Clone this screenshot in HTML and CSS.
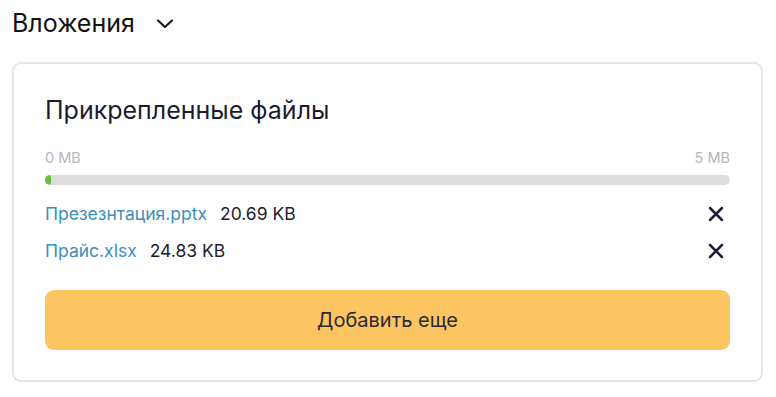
FILE: index.html
```html
<!DOCTYPE html>
<html lang="ru">
<head>
<meta charset="utf-8">
<link rel="stylesheet" href="styles.css">
</head>
<body>
<div class="page">
  <div class="section-head">
    <span class="section-title">Вложения</span>
    <svg class="chevron" width="18" height="12" viewBox="0 0 18 12"><path d="M2 2.5 L9 9 L16 2.5" fill="none" stroke="#1a1a22" stroke-width="2.2" stroke-linecap="round" stroke-linejoin="round"/></svg>
  </div>
  <div class="card">
    <h2 class="card-title">Прикрепленные файлы</h2>
    <div class="scale">
      <span>0 MB</span>
      <span>5 MB</span>
    </div>
    <div class="bar"><div class="bar-fill" style="width:6px"></div></div>
    <ul class="files">
      <li class="file">
        <a class="file-name" href="#">Презезнтация.pptx</a>
        <span class="file-size">20.69 KB</span>
        <button class="remove" aria-label="Удалить"><svg width="16" height="16" viewBox="0 0 16 16"><path d="M2 2 L14 14 M14 2 L2 14" stroke="#1b1d3a" stroke-width="2.5" stroke-linecap="round"/></svg></button>
      </li>
      <li class="file">
        <a class="file-name" href="#">Прайс.xlsx</a>
        <span class="file-size">24.83 KB</span>
        <button class="remove" aria-label="Удалить"><svg width="16" height="16" viewBox="0 0 16 16"><path d="M2 2 L14 14 M14 2 L2 14" stroke="#1b1d3a" stroke-width="2.5" stroke-linecap="round"/></svg></button>
      </li>
    </ul>
    <button class="add">Добавить еще</button>
  </div>
</div>
</body>
</html>
```
FILE: styles.css
```css
* { box-sizing: border-box; }
html, body { margin: 0; padding: 0; background: #fff; }
body { font-family: Inter, "Noto Sans", sans-serif; color: #1b1d2e; }
.page { padding: 8px 13px 0 12px; }
.section-head { display: flex; align-items: center; gap: 21px; height: 30px; }
.section-title { font-size: 25px; line-height: 30px; color: #111; }
.chevron { display: block; margin-top: 2px; }
.card {
  margin-top: 24px;
  border: 2px solid #e2e4ea;
  border-radius: 9px;
  padding: 31px 31px 30px 31px;
  height: 320px;
}
.card-title { margin: 0; font-size: 25px; font-weight: 400; color: #1b1d2e; line-height: 30px; }
.scale { display: flex; justify-content: space-between; font-size: 14.5px; color: #b4b6bc; margin-top: 24px; line-height: 18px; }
.bar { margin-top: 8px; height: 10px; background: #dcdcdc; border-radius: 5px; overflow: hidden; }
.bar-fill { height: 100%; background: #6bbf3a; border-radius: 5px; }
.files { list-style: none; margin: 10px 0 0; padding: 0; }
.file { display: flex; align-items: center; height: 37px; font-size: 17.5px; }
.file-name { color: #3b8fc0; text-decoration: none; }
.file-size { margin-left: 13px; color: #1b1d2e; }
.remove { margin-left: auto; margin-right: 6px; border: 0; background: none; padding: 0; display: flex; cursor: pointer; }
.add {
  margin-top: 21px;
  width: 100%;
  height: 60px;
  border: 0;
  border-radius: 9px;
  background: #fdc462;
  font-family: inherit;
  font-size: 20px;
  color: #2a2a35;
  cursor: pointer;
}
```
